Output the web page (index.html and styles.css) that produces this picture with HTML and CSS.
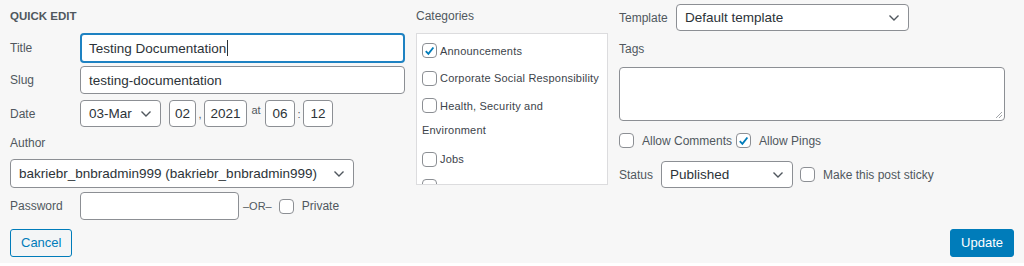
FILE: index.html
```html
<!DOCTYPE html>
<html>
  <head>
    <title>Quick Edit</title>
    <meta name="viewport" content="width=device-width, initial-scale=1">
    <link rel="stylesheet" href="styles.css">
  </head>
  <body>
  <div class="quick-edit">
    <div class="cols">
      <div class="col-left">
        <h4 class="heading">Quick Edit</h4>
        <div class="row row-title">
          <span class="label">Title</span>
          <div class="input focused">Testing Documentation<span class="caret"></span></div>
        </div>
        <div class="row row-slug">
          <span class="label">Slug</span>
          <div class="input">testing-documentation</div>
        </div>
        <div class="row row-date">
          <span class="label">Date</span>
          <div class="select sel-month">03-Mar<svg class="chev" width="12" height="8" viewBox="0 0 12 8"><path d="M1.5 1.5 L6 6 L10.5 1.5" fill="none" stroke="#50575e" stroke-width="1.4"/></svg></div>
          <div class="input small w-day">02</div>
          <span class="sep">,</span>
          <div class="input small w-year">2021</div>
          <span class="sep at">at</span>
          <div class="input small w-hour">06</div>
          <span class="sep">:</span>
          <div class="input small w-min">12</div>
        </div>
        <div class="author-label">Author</div>
        <div class="select sel-author">bakriebr_bnbradmin999 (bakriebr_bnbradmin999)<svg class="chev" width="12" height="8" viewBox="0 0 12 8"><path d="M1.5 1.5 L6 6 L10.5 1.5" fill="none" stroke="#50575e" stroke-width="1.4"/></svg></div>
        <div class="row row-pass">
          <span class="label">Password</span>
          <div class="input w-pass"></div>
          <span class="or">–OR–</span>
          <span class="check"></span>
          <span class="check-text">Private</span>
        </div>
      </div>
      <div class="col-mid">
        <div class="mid-label">Categories</div>
        <div class="cat-box">
          <div class="cat"><span class="check checked"><svg width="14" height="14" viewBox="0 0 14 14"><path d="M3 7.2 L5.8 10 L11.2 3.2" fill="none" stroke="#007cba" stroke-width="2"/></svg></span>Announcements</div>
          <div class="cat"><span class="check"></span>Corporate Social Responsibility</div>
          <div class="cat"><span class="check"></span>Health, Security and</div>
          <div class="cat wrap">Environment</div>
          <div class="cat"><span class="check"></span>Jobs</div>
          <div class="cat"><span class="check"></span></div>
        </div>
      </div>
      <div class="col-right">
        <div class="row row-template">
          <span class="label">Template</span>
          <div class="select sel-template">Default template<svg class="chev" width="12" height="8" viewBox="0 0 12 8"><path d="M1.5 1.5 L6 6 L10.5 1.5" fill="none" stroke="#50575e" stroke-width="1.4"/></svg></div>
        </div>
        <div class="tags-label">Tags</div>
        <div class="textarea"><svg class="grip" width="8" height="8" viewBox="0 0 8 8"><path d="M7 1 L1 7 M7 4 L4 7" stroke="#8c8f94" stroke-width="0.8"/></svg></div>
        <div class="row row-allow">
          <span class="check"></span>
          <span class="check-text">Allow Comments</span>
          <span class="check checked"><svg width="14" height="14" viewBox="0 0 14 14"><path d="M3 7.2 L5.8 10 L11.2 3.2" fill="none" stroke="#007cba" stroke-width="2"/></svg></span>
          <span class="check-text">Allow Pings</span>
        </div>
        <div class="row row-status">
          <span class="label">Status</span>
          <div class="select sel-status">Published<svg class="chev" width="12" height="8" viewBox="0 0 12 8"><path d="M1.5 1.5 L6 6 L10.5 1.5" fill="none" stroke="#50575e" stroke-width="1.4"/></svg></div>
          <span class="check"></span>
          <span class="check-text">Make this post sticky</span>
        </div>
      </div>
    </div>
    <div class="actions">
      <div class="btn cancel">Cancel</div>
      <div class="btn update">Update</div>
    </div>
  </div>
  </body>
</html>
```

FILE: styles.css
```css
* {
  box-sizing: border-box;
  margin: 0px;
  padding: 0px;
}
html {
  background-color: #ffffff;
}
body {
  font-family: "Liberation Sans", Arial, sans-serif;
  color: #50575e;
  font-size: 12px;
}
.quick-edit {
  background-color: #f7f7f7;
  height: 263px;
  padding: 0px 10px 0px 10px;
}
.cols {
  display: flex;
}
.col-left {
  width: 395px;
}
.col-mid {
  width: 192px;
  margin-left: 11px;
}
.col-right {
  width: 386px;
  margin-left: 11px;
}
.heading {
  font-size: 11.5px;
  font-weight: bold;
  text-transform: uppercase;
  color: #50575e;
  height: 33px;
  line-height: 33px;
}
.row {
  display: flex;
  align-items: center;
}
.label {
  width: 70px;
  flex-shrink: 0;
}
.input, .select, .textarea {
  background-color: #ffffff;
  border: 1px solid #8c8f94;
  border-radius: 4px;
  color: #2c3338;
  font-size: 13.5px;
  display: flex;
  align-items: center;
}
.input {
  height: 28px;
  padding: 0px 8px;
  flex: 1;
}
.focused {
  border: 2px solid #1e82c2;
  padding: 0px 7px;
  height: 30px;
}
.caret {
  display: inline-block;
  width: 1px;
  height: 16px;
  background-color: #2c3338;
  margin-left: 1px;
}
.row-slug {
  margin-top: 3px;
}
.row-date {
  margin-top: 6px;
}
.small {
  flex: none;
  justify-content: center;
  padding: 0px;
  height: 27px;
}
.w-day { width: 27px; margin-left: 8px; }
.w-year { width: 43px; }
.w-hour { width: 30px; }
.w-min { width: 30px; }
.sep {
  width: 8px;
  text-align: center;
  color: #50575e;
  font-size: 11px;
}
.at {
  width: 18px;
  margin-top: -8px;
}
.select {
  height: 27px;
  padding: 0px 8px;
  justify-content: space-between;
}
.chev {
  flex-shrink: 0;
}
.sel-month {
  width: 81px;
}
.author-label {
  height: 31px;
  line-height: 31px;
  margin-top: 1px;
}
.sel-author {
  width: 344px;
  height: 29px;
}
.row-pass {
  margin-top: 4px;
}
.w-pass {
  flex: none;
  width: 159px;
}
.or {
  font-size: 11px;
  margin-left: 4px;
  margin-right: 7px;
}
.check {
  display: inline-flex;
  align-items: center;
  justify-content: center;
  width: 15px;
  height: 15px;
  border: 1px solid #8c8f94;
  border-radius: 4px;
  background-color: #ffffff;
  flex-shrink: 0;
}
.check-text {
  margin-left: 8px;
  margin-right: 4px;
}
.mid-label {
  height: 33px;
  line-height: 33px;
}
.cat-box {
  background-color: #ffffff;
  border: 1px solid #dcdcde;
  height: 152px;
  overflow: hidden;
  padding: 3px 0px 0px 5px;
}
.cat {
  display: flex;
  align-items: center;
  height: 27.5px;
  font-size: 11px;
  color: #3c434a;
  letter-spacing: 0.2px;
}
.cat .check {
  margin-right: 3px;
}
.cat.wrap {
  height: 24px;
  margin-top: -2px;
  margin-bottom: 4px;
}
.row-template {
  margin-top: 4px;
}
.row-template .label {
  width: 57px;
}
.sel-template {
  width: 233px;
}
.tags-label {
  height: 36px;
  line-height: 36px;
}
.textarea {
  height: 54px;
  position: relative;
}
.grip {
  position: absolute;
  right: 1px;
  bottom: 1px;
}
.row-allow {
  margin-top: 12px;
}
.row-status {
  margin-top: 13px;
}
.row-status .label {
  width: 42px;
}
.sel-status {
  width: 132px;
  margin-right: 7px;
}
.actions {
  display: flex;
  justify-content: space-between;
  margin-top: 9px;
}
.btn {
  height: 28px;
  line-height: 26px;
  padding: 0px 10px;
  border-radius: 3px;
  font-size: 13px;
}
.cancel {
  border: 1px solid #007cba;
  color: #007cba;
  background-color: #f3f5f6;
}
.update {
  border: 1px solid #007cba;
  color: #ffffff;
  background-color: #007cba;
}
```
